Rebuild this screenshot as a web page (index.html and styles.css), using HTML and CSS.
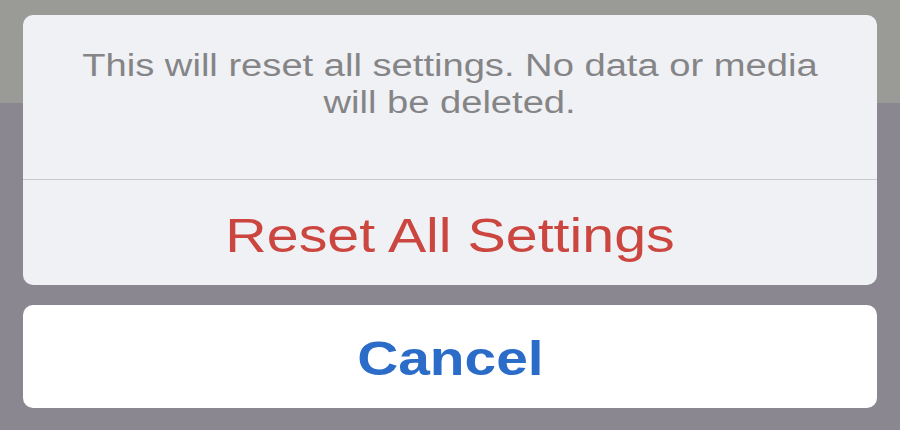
FILE: index.html
```html
<!DOCTYPE html>
<html>
<head>
<meta charset="utf-8">
<link rel="stylesheet" href="styles.css">
</head>
<body>
<div class="sheet">
  <div class="group">
    <div class="message">
      <span class="stretch">This will reset all settings. No data or media</span><br>
      <span class="stretch">will be deleted.</span>
    </div>
    <div class="action destructive"><span class="stretch">Reset All Settings</span></div>
  </div>
  <div class="cancel"><span class="stretch">Cancel</span></div>
</div>
</body>
</html>
```

FILE: styles.css
```css
html, body {
  margin: 0;
  padding: 0;
}
body {
  width: 900px;
  height: 430px;
  overflow: hidden;
  background: linear-gradient(to bottom, #9a9b97 0, #9a9b97 103px, #8a8790 103px, #8a8790 100%);
  font-family: "Liberation Sans", Arial, sans-serif;
}
.sheet {
  padding: 15px 23px 0 23px;
  display: flex;
  flex-direction: column;
  gap: 20px;
}
.group {
  background: #f0f1f5;
  border-radius: 10px;
  overflow: hidden;
}
.message {
  height: 165px;
  box-sizing: border-box;
  padding-top: 32px;
  text-align: center;
  font-size: 31px;
  line-height: 37px;
  color: #858587;
  border-bottom: 1px solid #c9cacd;
}
.stretch {
  display: inline-block;
  transform: scaleX(1.23);
  white-space: nowrap;
}
.action {
  height: 105px;
  display: flex;
  align-items: center;
  justify-content: center;
  padding-top: 4px;
  box-sizing: border-box;
  font-size: 49px;
}
.destructive {
  color: #cc4640;
}
.destructive .stretch {
  transform: scaleX(1.17);
}
.cancel {
  height: 103px;
  background: #ffffff;
  border-radius: 10px;
  display: flex;
  align-items: center;
  justify-content: center;
  padding-top: 2px;
  box-sizing: border-box;
  font-size: 49px;
  font-weight: bold;
  color: #2b6cc9;
}
.cancel .stretch {
  transform: scaleX(1.16);
}
```
